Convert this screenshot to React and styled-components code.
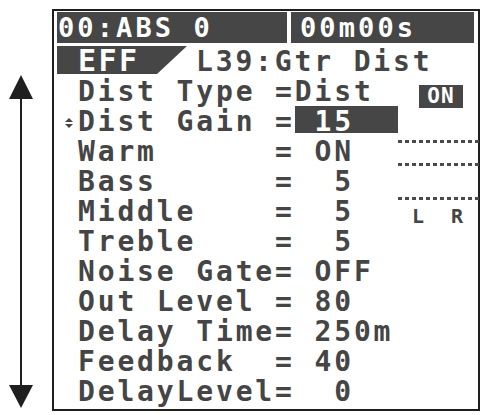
import styled, { createGlobalStyle } from "styled-components";

const GlobalStyle = createGlobalStyle`
    html, body {
        margin: 0;
        padding: 0;
        background: #ffffff;
    }
    body {
        font-family: "DejaVu Sans Mono", "Liberation Mono", monospace;
        font-weight: bold;
    }
`;

const Page = styled.div`
    display: flex;
    align-items: flex-start;
    width: 482px;
    height: 415px;
    padding-top: 9px;
    box-sizing: border-box;
`;

const ScrollRail = styled.div`
    width: 24px;
    margin: 66px 19px 0 9px;
    svg {
        display: block;
    }
`;

const Screen = styled.div`
    width: 428px;
    height: 402px;
    box-sizing: border-box;
    border: 2px solid #1f1f1f;
    padding: 1px 4px 0 3px;
    display: flex;
    flex-direction: column;
    color: #454545;
`;

const HeaderBar = styled.div`
    display: flex;
    gap: 4px;
    height: 31px;
`;

const HeaderCell = styled.div`
    flex: ${(props) => (props.$width ? `0 0 ${props.$width}px` : "1")};
    background: #464646;
    color: #ffffff;
    font-size: 27px;
    letter-spacing: 3.1px;
    line-height: 31px;
    padding-left: ${(props) => props.$pad}px;
    white-space: pre;
`;

const EffRow = styled.div`
    display: flex;
    align-items: flex-start;
    height: 30px;
    margin-top: 2px;
`;

const EffTab = styled.div`
    width: 130px;
    height: 28px;
    margin-top: 1px;
    box-sizing: border-box;
    padding: 1px 0 0 21px;
    background: #464646;
    clip-path: polygon(0 0, 100% 0, calc(100% - 30px) 100%, 0 100%);
    color: #ffffff;
    font-size: 30px;
    letter-spacing: 2.4px;
    line-height: 28px;
`;

const Title = styled.div`
    margin-left: 9px;
    font-size: 28px;
    letter-spacing: 2.85px;
    line-height: 30px;
    padding-top: 2px;
    white-space: pre;
`;

const Body = styled.div`
    display: flex;
`;

const ParamList = styled.div`
    width: 341px;
    flex: 0 0 341px;
`;

const ParamRow = styled.div`
    display: flex;
    align-items: flex-start;
    height: 30px;
`;

const Marker = styled.div`
    flex: 0 0 21px;
    svg {
        display: block;
        margin: 13px 0 0 8px;
    }
`;

const ParamText = styled.span`
    font-size: 28px;
    letter-spacing: 2.85px;
    line-height: 30px;
    padding-top: 2px;
    white-space: pre;
`;

const ValueBox = styled.span`
    flex: 0 0 103px;
    height: 27px;
    margin-top: 1px;
    box-sizing: border-box;
    padding-top: 2px;
    background: #464646;
    color: #ffffff;
    font-size: 28px;
    letter-spacing: 2.85px;
    line-height: 27px;
    white-space: pre;
`;

const MeterPanel = styled.div`
    flex: 1;
    display: flex;
    flex-direction: column;
    padding-top: 10px;
`;

const OnBadge = styled.div`
    width: 44px;
    height: 23px;
    margin-left: 21px;
    background: #464646;
    color: #ffffff;
    display: flex;
    align-items: center;
    justify-content: center;
    font-size: 21px;
    letter-spacing: 1px;
    line-height: 23px;
`;

const DotLine = styled.div`
    position: relative;
    height: 3px;
    margin-top: ${(props) => props.$gap}px;
    background: repeating-linear-gradient(
        90deg,
        #4a4a4a 0 4px,
        transparent 4px 7px
    );
    &::after {
        content: "";
        display: ${(props) => (props.$tail ? "block" : "none")};
        position: absolute;
        right: -1px;
        top: 2px;
        width: 3px;
        height: 3px;
        background: #4a4a4a;
    }
`;

const Channels = styled.div`
    display: flex;
    margin-top: 4px;
    padding-left: 14px;
    font-size: 20px;
    line-height: 24px;
`;

const Channel = styled.span`
    width: 39px;
`;

const params = [
    { label: "Dist Type =Dist" },
    { label: "Dist Gain =", value: " 15", active: true },
    { label: "Warm      = ON" },
    { label: "Bass      =  5" },
    { label: "Middle    =  5" },
    { label: "Treble    =  5" },
    { label: "Noise Gate= OFF" },
    { label: "Out Level = 80" },
    { label: "Delay Time= 250m" },
    { label: "Feedback  = 40" },
    { label: "DelayLevel=  0" },
];

function ScrollArrow() {
    return (
        <svg width="24" height="333" viewBox="0 0 24 333">
            <polygon points="12,0 24,24 0,24" fill="#1f1f1f" />
            <rect x="11" y="23" width="2" height="288" fill="#1f1f1f" />
            <polygon points="0,310 24,310 12,333" fill="#1f1f1f" />
        </svg>
    );
}

function UpDown() {
    return (
        <svg width="8" height="10" viewBox="0 0 8 10">
            <polygon points="4,0 8,4 0,4" fill="#454545" />
            <polygon points="0,6 8,6 4,10" fill="#454545" />
        </svg>
    );
}

function App() {
    return (
        <>
            <GlobalStyle />
            <Page>
                <ScrollRail>
                    <ScrollArrow />
                </ScrollRail>
                <Screen>
                    <HeaderBar>
                        <HeaderCell $width={229} $pad={1}>
                            00:ABS 0
                        </HeaderCell>
                        <HeaderCell $pad={9}>00m00s</HeaderCell>
                    </HeaderBar>
                    <EffRow>
                        <EffTab>EFF</EffTab>
                        <Title>L39:Gtr Dist</Title>
                    </EffRow>
                    <Body>
                        <ParamList>
                            {params.map((param) => (
                                <ParamRow key={param.label}>
                                    <Marker>{param.active && <UpDown />}</Marker>
                                    <ParamText>{param.label}</ParamText>
                                    {param.value && (
                                        <ValueBox>{param.value}</ValueBox>
                                    )}
                                </ParamRow>
                            ))}
                        </ParamList>
                        <MeterPanel>
                            <OnBadge>ON</OnBadge>
                            <DotLine $gap={32} $tail />
                            <DotLine $gap={20} $tail />
                            <DotLine $gap={31} />
                            <Channels>
                                <Channel>L</Channel>
                                <Channel>R</Channel>
                            </Channels>
                        </MeterPanel>
                    </Body>
                </Screen>
            </Page>
        </>
    );
}

export default App;
